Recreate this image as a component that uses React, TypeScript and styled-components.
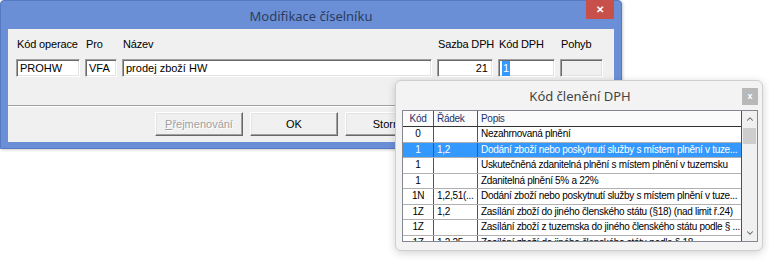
import styled, { createGlobalStyle } from "styled-components";
import { ChevronUp, ChevronDown } from "lucide-react";

const GlobalStyle = createGlobalStyle`
  html, body {
    margin: 0;
    padding: 0;
    background: #fff;
  }
  body {
    font-family: "Liberation Sans", Arial, sans-serif;
  }
`;

type CodeRow = {
  kod: string;
  radek: string;
  popis: string;
  selected?: boolean;
};

const rows: CodeRow[] = [
  { kod: "0", radek: "", popis: "Nezahrnovaná plnění" },
  {
    kod: "1",
    radek: "1,2",
    popis: "Dodání zboží nebo poskytnutí služby s místem plnění v tuze...",
    selected: true,
  },
  { kod: "1", radek: "", popis: "Uskutečněná zdanitelná plnění s místem plnění v tuzemsku" },
  { kod: "1", radek: "", popis: "Zdanitelná plnění 5% a 22%" },
  {
    kod: "1N",
    radek: "1,2,51(...",
    popis: "Dodání zboží nebo poskytnutí služby s místem plnění v tuze...",
  },
  {
    kod: "1Z",
    radek: "1,2",
    popis: "Zasílání zboží do jiného členského státu (§18) (nad limit ř.24)",
  },
  {
    kod: "1Z",
    radek: "",
    popis: "Zasílání zboží z tuzemska do jiného členského státu podle § ...",
  },
  {
    kod: "1Z",
    radek: "1,2,25",
    popis: "Zasílání zboží do jiného členského státu podle § 18 ...",
  },
];

export default function App() {
  return (
    <Desktop>
      <GlobalStyle />
      <MainWindow>
        <TitleBar>
          <span />
          <TitleText>Modifikace číselníku</TitleText>
          <CloseButton>✕</CloseButton>
        </TitleBar>
        <Client>
          <FieldsRow>
            <Field $w={64}>
              <Label>Kód operace</Label>
              <InputBox>PROHW</InputBox>
            </Field>
            <Field $w={32}>
              <Label>Pro</Label>
              <InputBox>VFA</InputBox>
            </Field>
            <Field $w={310}>
              <Label>Název</Label>
              <InputBox>prodej zboží HW</InputBox>
            </Field>
            <Field $w={56}>
              <Label>Sazba DPH</Label>
              <InputBox $right>21</InputBox>
            </Field>
            <Field $w={57}>
              <Label>Kód DPH</Label>
              <InputBox>
                <Selection>1</Selection>
              </InputBox>
            </Field>
            <Field $w={43}>
              <Label>Pohyb</Label>
              <InputBox $disabled />
            </Field>
          </FieldsRow>
          <Separator />
          <ButtonRow>
            <Button $disabled>
              <u>P</u>řejmenování
            </Button>
            <Button>OK</Button>
            <Button>Storno</Button>
          </ButtonRow>
        </Client>
      </MainWindow>

      <Popup>
        <PopupTitleBar>
          <span />
          <PopupTitle>Kód členění DPH</PopupTitle>
          <PopupClose>x</PopupClose>
        </PopupTitleBar>
        <ListView>
          <ListMain>
            <HeaderRow>
              <HeadCell $center>Kód</HeadCell>
              <HeadCell>Řádek</HeadCell>
              <HeadCell>Popis</HeadCell>
            </HeaderRow>
            {rows.map((row, i) => (
              <BodyRow key={i} $selected={row.selected}>
                <Cell $center>{row.kod}</Cell>
                <Cell>{row.radek}</Cell>
                <Cell>{row.popis}</Cell>
              </BodyRow>
            ))}
          </ListMain>
          <ScrollBar>
            <ScrollArrow>
              <ChevronUp size={10} strokeWidth={2.5} color="#606060" />
            </ScrollArrow>
            <ScrollThumb />
            <ScrollTrack />
            <ScrollArrow>
              <ChevronDown size={10} strokeWidth={2.5} color="#606060" />
            </ScrollArrow>
          </ScrollBar>
        </ListView>
      </Popup>
    </Desktop>
  );
}

const Desktop = styled.div`
  position: relative;
  width: 769px;
  height: 264px;
  overflow: hidden;
  background: #fff;
`;

const MainWindow = styled.div`
  position: absolute;
  left: 0;
  top: 0;
  width: 622px;
  height: 149px;
  box-sizing: border-box;
  display: flex;
  flex-direction: column;
  padding: 0 7px 6px;
  background: #6b8fd6;
  border: 1px solid #5679c4;
  border-radius: 4px 4px 0 0;
  box-shadow: 1px 1px 3px rgba(0, 0, 0, 0.2);
`;

const TitleBar = styled.div`
  height: 28px;
  display: grid;
  grid-template-columns: 1fr auto 1fr;
  align-items: center;
`;

const TitleText = styled.div`
  font-family: "Noto Sans", "Open Sans", sans-serif;
  font-size: 13px;
  color: #2a3d5f;
  padding-top: 1px;
`;

const CloseButton = styled.div`
  justify-self: end;
  align-self: start;
  width: 28px;
  height: 19px;
  margin-top: -1px;
  background: #c7504b;
  color: #fff;
  font-size: 10px;
  font-weight: bold;
  display: flex;
  align-items: center;
  justify-content: center;
`;

const Client = styled.div`
  flex: 1;
  display: flex;
  flex-direction: column;
  background: #f0f0f0;
  padding-top: 8px;
`;

const FieldsRow = styled.div`
  display: flex;
  gap: 5px;
  padding-left: 8px;
`;

const Field = styled.div<{ $w: number }>`
  width: ${(p) => p.$w}px;
  display: flex;
  flex-direction: column;
  gap: 8px;
`;

const Label = styled.div`
  height: 14px;
  line-height: 14px;
  font-size: 11px;
  letter-spacing: -0.15px;
  color: #000;
  padding-left: 1px;
  white-space: nowrap;
`;

const InputBox = styled.div<{ $right?: boolean; $disabled?: boolean }>`
  height: 18px;
  box-sizing: border-box;
  display: flex;
  align-items: center;
  justify-content: ${(p) => (p.$right ? "flex-end" : "flex-start")};
  padding: 0 4px 0 3px;
  font-size: 11px;
  color: #000;
  background: ${(p) => (p.$disabled ? "#f0f0f0" : "#fff")};
  border-top: 1px solid #a0a0a0;
  border-left: 1px solid #a0a0a0;
  border-right: 1px solid #fff;
  border-bottom: 1px solid #fff;
  box-shadow: inset 1px 1px 0 #696969, inset -1px -1px 0 #e3e3e3;
`;

const Selection = styled.span`
  background: #3399ff;
  color: #fff;
  padding: 1px 1px;
  line-height: 13px;
`;

const Separator = styled.div`
  margin-top: 28px;
  height: 0;
  border-top: 1px solid #a0a0a0;
  border-bottom: 1px solid #fff;
`;

const ButtonRow = styled.div`
  display: flex;
  gap: 7px;
  margin-top: 5px;
  padding-left: 147px;
`;

const Button = styled.div<{ $disabled?: boolean }>`
  width: 88px;
  height: 24px;
  box-sizing: border-box;
  display: flex;
  align-items: center;
  justify-content: center;
  font-size: 11px;
  color: ${(p) => (p.$disabled ? "#a0a0a0" : "#000")};
  text-shadow: ${(p) => (p.$disabled ? "1px 1px 0 #fff" : "none")};
  background: #f0f0f0;
  border: 1px solid;
  border-color: #fff #696969 #696969 #fff;
  box-shadow: inset -1px -1px 0 #a0a0a0, inset 1px 1px 0 #e3e3e3;
`;

const Popup = styled.div`
  position: absolute;
  left: 395px;
  top: 80px;
  width: 368px;
  height: 171px;
  box-sizing: border-box;
  display: flex;
  flex-direction: column;
  padding: 0 4px 8px 6px;
  background: #f3f3f3;
  border: 1px solid #cfcfcf;
  border-radius: 6px;
  box-shadow: 0 2px 8px rgba(0, 0, 0, 0.18);
`;

const PopupTitleBar = styled.div`
  height: 29px;
  display: grid;
  grid-template-columns: 1fr auto 1fr;
  align-items: center;
`;

const PopupTitle = styled.div`
  font-family: "Noto Sans", "Open Sans", sans-serif;
  font-size: 13px;
  color: #444;
`;

const PopupClose = styled.div`
  justify-self: end;
  width: 16px;
  height: 17px;
  margin-top: 1px;
  background: #b8b8b8;
  color: #fff;
  font-size: 9px;
  font-weight: bold;
  display: flex;
  align-items: center;
  justify-content: center;
`;

const ListView = styled.div`
  flex: 1;
  display: flex;
  overflow: hidden;
  background: #fff;
  border: 1px solid #828790;
`;

const ListMain = styled.div`
  flex: 1;
  display: flex;
  flex-direction: column;
  overflow: hidden;
  border-right: 1px solid #505050;
`;

const HeaderRow = styled.div`
  flex: none;
  height: 16px;
  box-sizing: border-box;
  display: grid;
  grid-template-columns: 31px 44px 1fr;
  background: #fbfbfb;
  border-bottom: 1px solid #333;
`;

const HeadCell = styled.div<{ $center?: boolean }>`
  font-size: 10px;
  letter-spacing: -0.3px;
  line-height: 15px;
  color: #1c3470;
  text-align: ${(p) => (p.$center ? "center" : "left")};
  padding-left: ${(p) => (p.$center ? "0" : "3px")};
  border-right: 1px solid #555;
  white-space: nowrap;
  overflow: hidden;
  &:last-child {
    border-right: none;
  }
`;

const BodyRow = styled.div<{ $selected?: boolean }>`
  flex: none;
  height: 15.5px;
  box-sizing: border-box;
  display: grid;
  grid-template-columns: 31px 44px 1fr;
  background: ${(p) => (p.$selected ? "#3399ff" : "#fff")};
  color: ${(p) => (p.$selected ? "#fff" : "#000")};
  border-bottom: 1px solid #b0b0b0;
`;

const Cell = styled.div<{ $center?: boolean }>`
  font-size: 10px;
  letter-spacing: -0.3px;
  line-height: 14px;
  text-align: ${(p) => (p.$center ? "center" : "left")};
  padding-left: ${(p) => (p.$center ? "0" : "3px")};
  border-right: 1px solid #555;
  white-space: nowrap;
  overflow: hidden;
  &:last-child {
    border-right: none;
  }
`;

const ScrollBar = styled.div`
  width: 15px;
  flex: none;
  display: flex;
  flex-direction: column;
  background: #f0f0f0;
`;

const ScrollArrow = styled.div`
  height: 16px;
  display: flex;
  align-items: center;
  justify-content: center;
`;

const ScrollThumb = styled.div`
  height: 16px;
  margin: 1px 1px 0;
  background: #cdcdcd;
`;

const ScrollTrack = styled.div`
  flex: 1;
`;
